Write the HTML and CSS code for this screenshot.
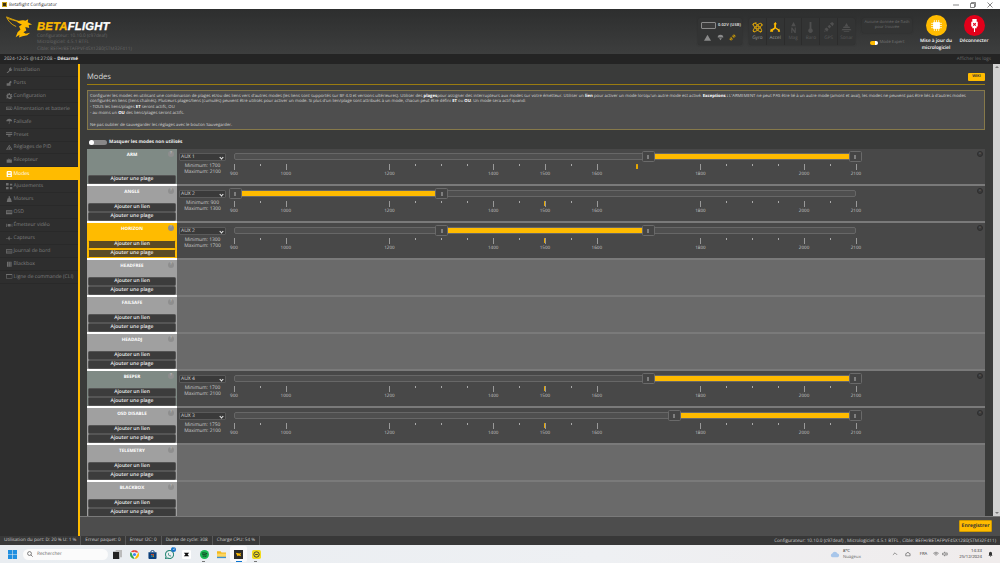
FILE: index.html
```html
<!DOCTYPE html>
<html lang="fr">
<head>
<meta charset="utf-8">
<title>Betaflight Configurator</title>
<link rel="stylesheet" href="styles.css">
</head>
<body>
<svg class="defs" width="0" height="0" aria-hidden="true">
  <symbol id="i-wrench" viewBox="0 0 10 10"><path d="M1 9 L5 5 A2.6 2.6 0 0 1 8.6 1.4 L7 3 L8 4 L9.4 2.6 A2.8 2.8 0 0 1 6 6 L2 10 Z"/></symbol>
  <symbol id="i-plug" viewBox="0 0 10 10"><path d="M1 9 L1 5 L4 5 L5 3 L7 1 L9 3 L7 5 L7 9 Z"/></symbol>
  <symbol id="i-gear" viewBox="0 0 10 10"><path fill-rule="evenodd" d="M4 0h2v1.600l1.400.6 1.100-1.100 1 1-1.100 1.300.6 1.100H10v2H8.400l-.6 1.300 1.100 1.100-1.200 1.200-1.100-1.100-.6.3V10H4V8.400l-1.300-.6-1.100 1.100-1.200-1.200 1.100-1.100-.4-1.600H0V4h1.600l.5-1.200L1 1.700l1-1 1.100 1.100L4 1.600zM5 3.200a1.800 1.800 0 1 0 0 3.600 1.800 1.800 0 0 0 0-3.600z"/></symbol>
  <symbol id="i-batt" viewBox="0 0 10 10"><path fill-rule="evenodd" d="M1 2.500h8a1 1 0 0 1 1 1v3a1 1 0 0 1-1 1H1a1 1 0 0 1-1-1v-3a1 1 0 0 1 1-1zM1 3.500v3h8v-3z"/><path d="M2 4.300h2v1.400H2zM5.500 4.300h2v1.400h-2z"/></symbol>
  <symbol id="i-umbrella" viewBox="0 0 10 10"><path d="M5 1C2.500 1 .6 2.800.4 5h9.200C9.400 2.800 7.500 1 5 1zM4.600 5h.8v3.300c0 1-1.800 1-1.800 0h.7c0 .2.300.2.300 0z"/></symbol>
  <symbol id="i-preset" viewBox="0 0 10 10"><path d="M0 2h10v1.500H0zM0 4.500h10V6H0zM3 7h4v1.500H3z"/></symbol>
  <symbol id="i-pid" viewBox="0 0 10 10"><path d="M5 1L10 9H0zM2 8h6L5 3z" fill-rule="evenodd"/><path d="M4 5h2v3H4z"/></symbol>
  <symbol id="i-rx" viewBox="0 0 10 10"><path d="M1 4h8v5H1zM3 1l2 3H4zM7 1L5 4h1z"/></symbol>
  <symbol id="i-modes" viewBox="0 0 10 10"><path fill-rule="evenodd" d="M2 0h6l1 1v8l-1 1H2L1 9V1zM3 2v2h4V2zM3 6v2h4V6z"/></symbol>
  <symbol id="i-adjust" viewBox="0 0 10 10"><path d="M0 0h4v4H0zM6 1h4v3H6zM0 6h4v4H0zM6 6h4v4H6z"/></symbol>
  <symbol id="i-motor" viewBox="0 0 10 10"><path d="M4 .5h2v3h1.500L9 9.500H1L2.500 3.500H4z"/></symbol>
  <symbol id="i-osd" viewBox="0 0 10 10"><path d="M0 2h10v6H0z"/><path d="M1 3.500h8v.7H1zM1 5.500h8v.7H1z" fill="#2e2e2e"/></symbol>
  <symbol id="i-vtx" viewBox="0 0 10 10"><path d="M3 3h4v4H3zM0 2.500h1v5H0zM2 3.500h.5v3H2zM9 2.500h1v5H9zM7.500 3.500H8v3h-.5z"/></symbol>
  <symbol id="i-sensor" viewBox="0 0 10 10"><path d="M0 4.500h3.500L4.500 2h1v2.500H10v1H5.500V8h-1L3.500 5.500H0z"/></symbol>
  <symbol id="i-log" viewBox="0 0 10 10"><path fill-rule="evenodd" d="M0 2h10v6.500H0zM1 3.500v1h8v-1zM1 5.500v1.500h8V5.500z"/></symbol>
  <symbol id="i-box" viewBox="0 0 10 10"><path d="M1.500 1h7v8h-7z"/><path d="M4 1h.7v8H4zM6 1h.7v8H6z" fill="#2e2e2e"/></symbol>
  <symbol id="i-cli" viewBox="0 0 10 10"><path fill-rule="evenodd" d="M0 1.500h10v7H0zM1 3v4.500h8V3z"/></symbol>
</svg>

<div class="titlebar">
  <span class="app-icon"></span>
  <span class="app-name">Betaflight Configurator</span>
  <span class="win-controls">
    <svg viewBox="0 0 6 6"><path d="M0 3h6" /></svg>
    <svg viewBox="0 0 6 6"><path d="M.5 1.500h4v4h-4zM1.500 1.500V.5h4v4h-1" fill="none"/></svg>
    <svg viewBox="0 0 6 6"><path d="M.5.5l5 5M5.500.5l-5 5"/></svg>
  </span>
</div>

<header class="header">
  <div class="brand">
    <svg class="bird" viewBox="0 0 29 24">
      <path class="bird-line" d="M.5 1.500C4 3 9 5 14.500 6.500M.5 1.500C2 5.500 5.500 9.500 10.500 11.500M1.500 3C5 4.500 10 5.500 13 6.500"/>
      <path class="bird-fill" d="M11 6.500C14 5 17 4.500 20 5.500L23 4 22.500 7 27 9.500 23.500 9.800 24 13 20 12 21 15.500 18 17.500 20.500 19 25 18 22 20.500 17 21.500 13.500 23 14 20 10 22.500 12 17.500 15 14.500 13.500 11.500 16.500 9.500 14 8.500Z"/>
    </svg>
    <div class="brand-text">
      <div class="wordmark"><span class="beta">BETA</span>FLIGHT</div>
      <div class="build">Configurateur: 10.10.0 (c97deaf)</div>
      <div class="build">Micrologiciel: 4.5.1 BTFL</div>
      <div class="build">Cible: BEFH/BETAFPVF4SX1280(STM32F411)</div>
    </div>
  </div>

  <div class="panel battery">
    <div class="batt-row"><span class="batt-shape"></span><span class="batt-text">0.02V (USB)</span></div>
    <div class="batt-icons">
      <svg class="ico-grey" viewBox="0 0 10 10"><path d="M5 1L10 9.500H0z"/></svg>
      <svg class="ico-grey" viewBox="0 0 10 10"><path d="M5 1C2 1 1 3 1 5h8C9 3 8 1 5 1zM3 6h4L5 9z"/></svg>
      <svg class="ico-yellow" viewBox="0 0 10 10"><path d="M2 8L4 6M6 4l2-2M1 7l2-2 2 2-2 2zM5 3l2-2 2 2-2 2z" fill="none"/></svg>
    </div>
  </div>

  <div class="panel sensors">
    <div class="sensor on">
      <svg viewBox="0 0 12 12"><g fill="none"><circle cx="6" cy="6" r="1.400"/><ellipse cx="6" cy="6" rx="6" ry="2.200" transform="rotate(45 6 6)"/><ellipse cx="6" cy="6" rx="6" ry="2.200" transform="rotate(-45 6 6)"/><rect x="1" y="1" width="10" height="10" rx="2" stroke-dasharray="2 6"/></g></svg>
      <span>Gyro</span>
    </div>
    <div class="sensor on">
      <svg viewBox="0 0 12 12"><path class="solid" d="M6 0l1.500 2.500h-1V6l3 2 .6-1 1 3.500H8.500l.5-1L6 7 3 9.500l.5 1H0L1 7l.6 1 3-2V2.500h-1z"/></svg>
      <span>Accel</span>
    </div>
    <div class="sensor">
      <svg viewBox="0 0 12 12"><path class="solid" d="M6 0l2.500 4.500h-5zM3.500 6h1.200l2.600 3.500V6h1.200v6H7.300L4.700 8.500V12H3.500z"/></svg>
      <span>Mag</span>
    </div>
    <div class="sensor">
      <svg viewBox="0 0 12 12"><path class="solid" d="M5 0h2v7.200a2.500 2.500 0 1 1-2 0z"/></svg>
      <span>Baro</span>
    </div>
    <div class="sensor">
      <svg viewBox="0 0 12 12"><path class="solid" d="M5 5l2-2 2 2-2 2zM7.500 1.500L10 0l2 2-1.500 2.500zM1.500 7.500L4 6l2 2-1.500 2.500zM1 11l1-2 1 1z"/></svg>
      <span>GPS</span>
    </div>
    <div class="sensor">
      <svg viewBox="0 0 12 12"><path class="solid" d="M6 1l2 3.500H4zM3 5h6l1 1.500H2zM1.500 7.500h9l1 1.500H.5zM3 10h6v1H3z"/></svg>
      <span>Sonar</span>
    </div>
  </div>

  <div class="flash-col">
    <div class="flash">Aucune donnée de flash<br>pour trouvée</div>
    <div class="expert"><span class="mini-switch"></span><span>Mode Expert</span></div>
  </div>

  <div class="action">
    <span class="disc disc-yellow">
      <svg viewBox="0 0 12 12"><path class="chip" d="M3 3h6v6H3z"/><path class="chip-pins" d="M4 1v10M6 1v10M8 1v10M1 4h10M1 6h10M1 8h10"/><path class="chip" d="M3.200 3.200h5.600v5.600H3.200z"/></svg>
    </span>
    <span class="action-label">Mise à jour du<br>micrologiciel</span>
  </div>
  <div class="action">
    <span class="disc disc-red">
      <svg viewBox="0 0 12 12"><path class="plug" d="M4 0h4v2.500h1V7H8v1.500H6.500V12h-1V8.500H4V7H3V2.500h1z"/><path class="plug-x" d="M4.800 3.800l2.400 2.400M7.200 3.800L4.800 6.200"/></svg>
    </span>
    <span class="action-label">Déconnecter</span>
  </div>
</header>

<div class="logbar">
  <span>2024-12-25 @14:27:08 – <b>Désarmé</b></span>
  <span class="show-logs">Afficher les logs</span>
</div>

<div class="main">
  <nav class="sidebar">
    <a class="nav-item"><svg><use href="#i-wrench"/></svg>Installation</a>
    <a class="nav-item"><svg><use href="#i-plug"/></svg>Ports</a>
    <a class="nav-item"><svg><use href="#i-gear"/></svg>Configuration</a>
    <a class="nav-item"><svg><use href="#i-batt"/></svg>Alimentation et batterie</a>
    <a class="nav-item"><svg><use href="#i-umbrella"/></svg>Failsafe</a>
    <a class="nav-item"><svg><use href="#i-preset"/></svg>Preset</a>
    <a class="nav-item"><svg><use href="#i-pid"/></svg>Réglages de PID</a>
    <a class="nav-item"><svg><use href="#i-rx"/></svg>Récepteur</a>
    <a class="nav-item active"><svg><use href="#i-modes"/></svg>Modes</a>
    <a class="nav-item"><svg><use href="#i-adjust"/></svg>Ajustements</a>
    <a class="nav-item"><svg><use href="#i-motor"/></svg>Moteurs</a>
    <a class="nav-item"><svg><use href="#i-osd"/></svg>OSD</a>
    <a class="nav-item"><svg><use href="#i-vtx"/></svg>Émetteur vidéo</a>
    <a class="nav-item"><svg><use href="#i-sensor"/></svg>Capteurs</a>
    <a class="nav-item"><svg><use href="#i-log"/></svg>Journal de bord</a>
    <a class="nav-item"><svg><use href="#i-box"/></svg>Blackbox</a>
    <a class="nav-item"><svg><use href="#i-cli"/></svg>Ligne de commande (CLI)</a>
  </nav>

  <section class="content">
    <div class="scroll">
      <div class="page">
        <div class="title-row"><h1>Modes</h1><span class="wiki">WIKI</span></div>
        <div class="note">
          <p>Configurer les modes en utilisant une combinaison de plages et/ou des liens vers d'autres modes (les liens sont supportés sur BF 4.0 et versions ultérieures). Utiliser des <b>plages</b>pour assigner des interrupteurs aux modes sur votre émetteur. Utiliser un <b>lien</b> pour activer un mode lorsqu'un autre mode est activé. <b>Exceptions :</b> L'ARMEMENT ne peut PAS être lié à un autre mode (amont et aval), les modes ne peuvent pas être liés à d'autres modes configurés en liens (liens chaînés). Plusieurs plages/liens (cumulés) peuvent être utilisés pour activer un mode. Si plus d'un lien/plage sont attribués à un mode, chacun peut être défini <b>ET</b> ou <b>OU</b>. Un mode sera actif quand:<br>- TOUS les liens/plages <b>ET</b> seront actifs, OU<br>- au moins un <b>OU</b> des liens/plages seront actifs.<br><br>Ne pas oublier de sauvegarder les réglages avec le bouton Sauvegarder.</p>
        </div>
        <label class="hide-unused"><span class="switch"></span>Masquer les modes non utilisés</label>

        <div class="mode armed">
          <div class="mode-head">
            <div class="mode-name">ARM<i class="help">?</i></div>
            <button class="add">Ajouter une plage</button>
          </div>
          <div class="mode-body">
            <div class="range-ctl">
              <div class="aux">AUX 1</div>
              <div class="minmax">Minimum: 1700<br>Maximum: 2100</div>
            </div>
            <div class="slider">
              <div class="track"><span class="fill" style="left:66.67%;width:33.33%"></span><span class="handle" style="left:66.67%"></span><span class="handle" style="left:100%"></span></div>
              <div class="scale"><span class="mark" style="left:64.8%"></span><b>900</b><b>1000</b><u></u><b>1200</b><u></u><b>1400</b><b>1500</b><b>1600</b><u></u><b>1800</b><u></u><b>2000</b><b>2100</b></div>
            </div>
            <i class="remove"></i>
          </div>
        </div>

        <div class="mode">
          <div class="mode-head">
            <div class="mode-name">ANGLE<i class="help">?</i></div>
            <button class="add">Ajouter un lien</button>
            <button class="add">Ajouter une plage</button>
          </div>
          <div class="mode-body">
            <div class="range-ctl">
              <div class="aux">AUX 2</div>
              <div class="minmax">Minimum: 900<br>Maximum: 1300</div>
            </div>
            <div class="slider">
              <div class="track"><span class="fill" style="left:0;width:33.33%"></span><span class="handle" style="left:0"></span><span class="handle" style="left:33.33%"></span></div>
              <div class="scale"><span class="mark" style="left:50%"></span><b>900</b><b>1000</b><u></u><b>1200</b><u></u><b>1400</b><b>1500</b><b>1600</b><u></u><b>1800</b><u></u><b>2000</b><b>2100</b></div>
            </div>
            <i class="remove"></i>
          </div>
        </div>

        <div class="mode live">
          <div class="mode-head">
            <div class="mode-name">HORIZON<i class="help">?</i></div>
            <button class="add">Ajouter un lien</button>
            <button class="add">Ajouter une plage</button>
          </div>
          <div class="mode-body">
            <div class="range-ctl">
              <div class="aux">AUX 2</div>
              <div class="minmax">Minimum: 1300<br>Maximum: 1700</div>
            </div>
            <div class="slider">
              <div class="track"><span class="fill" style="left:33.33%;width:33.33%"></span><span class="handle" style="left:33.33%"></span><span class="handle" style="left:66.67%"></span></div>
              <div class="scale"><span class="mark" style="left:50%"></span><b>900</b><b>1000</b><u></u><b>1200</b><u></u><b>1400</b><b>1500</b><b>1600</b><u></u><b>1800</b><u></u><b>2000</b><b>2100</b></div>
            </div>
            <i class="remove"></i>
          </div>
        </div>

        <div class="mode unused">
          <div class="mode-head">
            <div class="mode-name">HEADFREE<i class="help">?</i></div>
            <button class="add">Ajouter un lien</button>
            <button class="add">Ajouter une plage</button>
          </div>
          <div class="mode-body"></div>
        </div>

        <div class="mode unused">
          <div class="mode-head">
            <div class="mode-name">FAILSAFE<i class="help">?</i></div>
            <button class="add">Ajouter un lien</button>
            <button class="add">Ajouter une plage</button>
          </div>
          <div class="mode-body"></div>
        </div>

        <div class="mode unused">
          <div class="mode-head">
            <div class="mode-name">HEADADJ<i class="help">?</i></div>
            <button class="add">Ajouter un lien</button>
            <button class="add">Ajouter une plage</button>
          </div>
          <div class="mode-body"></div>
        </div>

        <div class="mode armed">
          <div class="mode-head">
            <div class="mode-name">BEEPER<i class="help">?</i></div>
            <button class="add">Ajouter un lien</button>
            <button class="add">Ajouter une plage</button>
          </div>
          <div class="mode-body">
            <div class="range-ctl">
              <div class="aux">AUX 4</div>
              <div class="minmax">Minimum: 1700<br>Maximum: 2100</div>
            </div>
            <div class="slider">
              <div class="track"><span class="fill" style="left:66.67%;width:33.33%"></span><span class="handle" style="left:66.67%"></span><span class="handle" style="left:100%"></span></div>
              <div class="scale"><span class="mark" style="left:50%"></span><b>900</b><b>1000</b><u></u><b>1200</b><u></u><b>1400</b><b>1500</b><b>1600</b><u></u><b>1800</b><u></u><b>2000</b><b>2100</b></div>
            </div>
            <i class="remove"></i>
          </div>
        </div>

        <div class="mode">
          <div class="mode-head">
            <div class="mode-name">OSD DISABLE<i class="help">?</i></div>
            <button class="add">Ajouter un lien</button>
            <button class="add">Ajouter une plage</button>
          </div>
          <div class="mode-body">
            <div class="range-ctl">
              <div class="aux">AUX 3</div>
              <div class="minmax">Minimum: 1750<br>Maximum: 2100</div>
            </div>
            <div class="slider">
              <div class="track"><span class="fill" style="left:70.83%;width:29.17%"></span><span class="handle" style="left:70.83%"></span><span class="handle" style="left:100%"></span></div>
              <div class="scale"><span class="mark" style="left:50%"></span><b>900</b><b>1000</b><u></u><b>1200</b><u></u><b>1400</b><b>1500</b><b>1600</b><u></u><b>1800</b><u></u><b>2000</b><b>2100</b></div>
            </div>
            <i class="remove"></i>
          </div>
        </div>

        <div class="mode unused">
          <div class="mode-head">
            <div class="mode-name">TELEMETRY<i class="help">?</i></div>
            <button class="add">Ajouter un lien</button>
            <button class="add">Ajouter une plage</button>
          </div>
          <div class="mode-body"></div>
        </div>

        <div class="mode unused">
          <div class="mode-head">
            <div class="mode-name">BLACKBOX<i class="help">?</i></div>
            <button class="add">Ajouter un lien</button>
            <button class="add">Ajouter une plage</button>
          </div>
          <div class="mode-body"></div>
        </div>
      </div>
      <div class="scrollbar"><span class="arrow up"></span><span class="arrow down"></span></div>
    </div>
    <div class="savebar"><button class="save">Enregistrer</button></div>
  </section>
</div>

<footer class="status">
  <span class="cell">Utilisation du port: D: 20 % U: 1 %</span>
  <span class="cell">Erreur paquet: 0</span>
  <span class="cell">Erreur I2C: 0</span>
  <span class="cell">Durée de cycle: 308</span>
  <span class="cell">Charge CPU: 54 %</span>
  <span class="versions">Configurateur: 10.10.0 (c97deaf) , Micrologiciel: 4.5.1 BTFL , Cible: BEFH/BETAFPVF4SX1280(STM32F411)</span>
</footer>

<div class="taskbar">
  <svg class="tb-start" viewBox="0 0 10 10"><path d="M0 0h4.700v4.700H0zM5.300 0H10v4.700H5.300zM0 5.300h4.700V10H0zM5.300 5.300H10V10H5.300z"/></svg>
  <div class="tb-search">
    <svg viewBox="0 0 10 10"><circle cx="4.200" cy="4.200" r="3.200"/><path d="M6.500 6.500L9.500 9.500"/></svg>
    <span>Rechercher</span>
  </div>
  <div class="tb-apps">
    <span class="tb-app"><svg viewBox="0 0 10 10"><path d="M0 2h7v8H0z" fill="#222"/><path d="M3 0h7v8H7V2H3z" fill="#bbb"/></svg></span>
    <span class="tb-app"><svg viewBox="0 0 10 10"><path d="M5 0a5 5 0 0 1 4.500 2.800H5z" fill="#ea4335"/><path d="M9.500 2.800A5 5 0 0 1 5 10l2.200-4z" fill="#fbbc05"/><path d="M5 10A5 5 0 0 1 1 2l2.300 4z" fill="#34a853"/><path d="M1 2A5 5 0 0 1 5 0v2.800z" fill="#ea4335"/><circle cx="5" cy="5" r="2.400" fill="#fff"/><circle cx="5" cy="5" r="1.800" fill="#4285f4"/></svg></span>
    <span class="tb-app"><svg viewBox="0 0 10 10"><path d="M.5 2.500h9V9a1 1 0 0 1-1 1h-7a1 1 0 0 1-1-1z" fill="#0b3f7a"/><path d="M3 2.500a2 2 0 0 1 4 0" fill="none" stroke="#0b3f7a"/><path d="M3.500 4.500h1.300v1.300H3.500zM5.200 4.500h1.300v1.300H5.200z" fill="#f25022"/><path d="M3.500 6.200h1.300v1.300H3.500z" fill="#00a4ef"/><path d="M5.200 6.200h1.300v1.300H5.200z" fill="#ffb900"/></svg></span>
    <span class="tb-app tb-badged"><svg viewBox="0 0 10 10"><path d="M5 .5a4.500 4.500 0 1 1-2.200 8.400L.5 9.500 1.200 7.300A4.500 4.500 0 0 1 5 .5z" fill="none" stroke="#2e8b78" stroke-width="1.200"/><path d="M3.500 3l1 1.500-.4.600 1 1 .7-.4L7 6.800C5.500 8 2.500 5.500 3.500 3z" fill="#2e8b78"/></svg><i class="badge">2</i></span>
    <span class="tb-app"><svg viewBox="0 0 10 10"><rect width="10" height="10" rx="1.500" fill="#fff"/><path d="M2 3h6L6.200 5 8 7H2l1.800-2z" fill="#111"/></svg></span>
    <span class="tb-app tb-running"><svg viewBox="0 0 10 10"><circle cx="5" cy="5" r="5" fill="#1db954"/><path d="M2 3.500c2-.5 4-.3 6 .6M2.500 5.200c1.800-.4 3.400-.2 5 .5M3 6.800c1.400-.3 2.800-.1 4 .4" fill="none" stroke="#111" stroke-width=".8"/></svg></span>
    <span class="tb-app"><svg viewBox="0 0 10 10"><path d="M0 1.500h4l1 1.200h5V9H0z" fill="#f4b81c"/><path d="M0 4h10v5H0z" fill="#fcd55f"/><path d="M0 7.500h10V9H0z" fill="#3b8ed0"/></svg></span>
    <span class="tb-app tb-active"><svg viewBox="0 0 10 10"><rect width="10" height="10" fill="#2b2b2b"/><path d="M2 3l4 1 2-1-1 2 1 2-3-1-1 1z" fill="#ffbb00"/></svg></span>
    <span class="tb-app tb-running"><svg viewBox="0 0 10 10"><rect width="10" height="10" rx="2" fill="#f2dc1d"/><circle cx="5" cy="5" r="3" fill="none" stroke="#333" stroke-width="1"/><path d="M3.500 5h3" stroke="#333" stroke-width="1"/></svg></span>
  </div>
  <div class="tb-tray">
    <svg class="tb-cloud" viewBox="0 0 14 9"><path d="M3.500 8.500a2.700 2.700 0 0 1-.3-5.300A3.800 3.800 0 0 1 10.400 3a2.800 2.800 0 0 1 .3 5.500z"/></svg>
    <div class="tb-weather">8°C<br><span>Nuageux</span></div>
    <svg class="tb-ico chevron" viewBox="0 0 10 10"><path d="M1.500 6.500L5 3l3.500 3.500"/></svg>
    <svg class="tb-ico cloud-out" viewBox="0 0 10 10"><path d="M2 8h6.500V4.500H7L6 2.500H3.500L2.500 4.500H1.200V8z"/></svg>
    <span class="tb-lang">FRA</span>
    <svg class="tb-ico wifi" viewBox="0 0 10 10"><path d="M.5 4a6.500 6.500 0 0 1 9 0M2 5.500a4.300 4.300 0 0 1 6 0M3.500 7a2 2 0 0 1 3 0"/></svg>
    <svg class="tb-ico vol" viewBox="0 0 10 10"><path d="M.8 3.800h1.500L5 1.500v7L2.300 6.200H.8zM6.500 3.500a2 2 0 0 1 0 3M7.800 2.200a4 4 0 0 1 0 5.600"/></svg>
    <div class="tb-clock">14:33<br>25/12/2024</div>
    <svg class="tb-bell" viewBox="0 0 10 10"><path d="M5 .5a3 3 0 0 1 3 3V7l1 1.300H1L2 7V3.500a3 3 0 0 1 3-3zM4 9h2v1H4z"/></svg>
  </div>
</div>
</body>
</html>
```
FILE: styles.css
```css
* { box-sizing: border-box; }
html, body { margin: 0; padding: 0; }
body {
  width: 1000px; height: 563px; overflow: hidden;
  display: flex; flex-direction: column;
  font-family: "Open Sans", "Noto Sans", sans-serif;
  font-size: 5.2px; color: #ddd; background: #3a3b3a;
  text-rendering: geometricPrecision;
}
button { text-rendering: geometricPrecision; }
.defs { position: absolute; }
b { font-weight: 700; }

/* title bar */
.titlebar { height: 9px; flex: none; background: #fff; display: flex; align-items: center; padding-left: 2px; color: #333; font-size: 4.5px; }
.app-icon { width: 5px; height: 5px; background: #3a2e10; border: 1px solid #caa017; margin-right: 2px; }
.win-controls { margin-left: auto; display: flex; gap: 11px; padding-right: 7px; }
.win-controls svg { width: 6px; height: 6px; fill: none; stroke: #555; stroke-width: .7; }

/* header */
.header {
  height: 45px; flex: none; display: flex; align-items: flex-start; padding: 9px 7px 0 0;
  background: linear-gradient(#2d2e2e, #3d3e3e);
}
.brand { display: flex; align-items: flex-start; margin-right: auto; margin-top: -3px; padding-left: 6px; }
.bird { width: 28px; height: 24px; margin-right: 3px; }
.bird-line { fill: none; stroke: #ffbb00; stroke-width: .8; }
.bird-fill { fill: #ffbb00; }
.brand-text { margin-top: 7px; }
.wordmark { font-family: "Liberation Sans", sans-serif; font-weight: 700; font-style: italic; font-size: 11.3px; line-height: 11px; color: #fff; letter-spacing: .2px; -webkit-text-stroke: .3px currentColor; }
.beta { color: #ffbb00; }
.build { color: #666; font-size: 4.7px; line-height: 6.4px; white-space: nowrap; }

.panel { height: 27px; background: #333434; border-radius: 2px; box-shadow: 0 0 2px #2a2a2a; }
.battery { width: 44px; padding: 4px 3px 0; margin-right: 7px; }
.batt-row { display: flex; align-items: center; gap: 2px; }
.batt-shape { width: 15px; height: 7px; border: 1px solid #8a8a8a; border-radius: 1px; background: #3c3c3c; flex: none; }
.batt-text { font-size: 4.1px; font-weight: 700; color: #ccc; white-space: nowrap; }
.batt-icons { display: flex; justify-content: space-between; padding: 5px 3px 0 3px; }
.batt-icons svg { width: 7px; height: 7px; }
.ico-grey { fill: #8a8a8a; }
.ico-yellow { stroke: #e0a800; stroke-width: 1.2; }

.sensors { width: 106px; display: flex; margin-right: 7px; }
.sensor { flex: 1; display: flex; flex-direction: column; align-items: center; padding-top: 4px; border-right: 1px solid #2c2c2c; font-size: 4.7px; color: #5a5a5a; }
.sensor:last-child { border-right: 0; }
.sensor svg { width: 11px; height: 11px; margin-bottom: 2px; fill: none; stroke: #4f4f4f; stroke-width: .9; }
.sensor .solid { fill: #4f4f4f; stroke: none; }
.sensor.on { color: #9a9a9a; }
.sensor.on svg { stroke: #ffbb00; }
.sensor.on .solid { fill: #ffbb00; }

.flash-col { width: 50px; margin-right: 5px; }
.flash { height: 15px; background: #333434; border-radius: 2px; box-shadow: 0 0 2px #2a2a2a; color: #6e6e6e; font-size: 4px; line-height: 5.4px; text-align: center; padding-top: 2px; }
.expert { display: flex; align-items: center; justify-content: center; gap: 2px; margin-top: 7px; font-size: 4.2px; color: #777; }
.mini-switch { width: 8px; height: 4px; border-radius: 2px; background: linear-gradient(90deg, #ffbb00 60%, #fff 60%); }

.action { width: 38px; display: flex; flex-direction: column; align-items: center; margin-top: -3px; }
.disc { width: 21px; height: 21px; border-radius: 50%; display: flex; align-items: center; justify-content: center; }
.disc svg { width: 13px; height: 13px; }
.disc-yellow { background: #ffbb00; }
.disc-red { background: #e2001a; }
.chip { fill: #fff; }
.chip-pins { stroke: #fff; stroke-width: .7; fill: none; }
.plug { fill: #fff; }
.plug-x { stroke: #e2001a; stroke-width: 1; fill: none; }
.action-label { color: #fff; font-size: 4.7px; font-weight: 600; line-height: 6.5px; text-align: center; margin-top: 2px; white-space: nowrap; }

/* log bar */
.logbar { height: 10px; flex: none; background: #242424; display: flex; justify-content: space-between; align-items: center; padding: 0 9px 0 4px; font-size: 4.7px; color: #ccc; }
.logbar b { color: #eee; }
.show-logs { color: #6a6a6a; }

/* body */
.main { height: 472px; flex: none; display: flex; }
.sidebar { width: 80px; flex: none; background: #2e2e2e; border-right: 2px solid #ffbb00; display: flex; flex-direction: column; }
.nav-item { height: 12.93px; flex: none; display: flex; align-items: center; padding-left: 6px; font-size: 5.1px; color: #808080; border-bottom: 1px solid #292929; white-space: nowrap; }
.nav-item svg { width: 6.5px; height: 6.5px; margin-right: 1px; fill: #6f6f6f; flex: none; }
.nav-item.active { background: #ffbb00; color: #fff; border-bottom: 0; }
.nav-item.active svg { fill: #fff; }

.content { flex: 1; min-width: 0; display: flex; flex-direction: column; }
.scroll { height: 452px; flex: none; display: flex; overflow: hidden; background: #3a3b3a; }
.page { flex: 1; min-width: 0; padding: 0 8px 0 7px; overflow: hidden; }
.scrollbar { width: 7px; flex: none; background: #d2d2d2; display: flex; flex-direction: column; justify-content: space-between; padding: 2px 0; align-items: center; }
.arrow { width: 0; height: 0; border-left: 2px solid transparent; border-right: 2px solid transparent; }
.arrow.up { border-bottom: 2px solid #777; }
.arrow.down { border-top: 2px solid #777; }

.title-row { height: 21px; display: flex; justify-content: space-between; align-items: flex-start; border-bottom: 1px solid #9a7c10; }
h1 { margin: 8px 0 0; font-size: 7.6px; line-height: 11px; font-weight: 400; color: #d8d8d8; }
.wiki { margin-top: 9px; width: 17px; height: 8px; border-radius: 1px; background: #ffbb00; color: #333; font-size: 3.8px; font-weight: 700; text-align: center; line-height: 8px; }

.note { margin-top: 5px; height: 40px; background: #4e4e4e; border: 1px solid #86794a; padding: 2.5px 2px 0 2px; }
.note p { margin: 0; font-size: 4.25px; line-height: 5.9px; color: #d6d6d6; }
.note b { color: #fff; }

.hide-unused { display: flex; align-items: center; height: 6px; margin: 9px 0 4px 2px; color: #eee; font-weight: 700; font-size: 4.7px; }
.switch { width: 18px; height: 5px; border-radius: 3px; background: #888; margin-right: 2px; position: relative; }
.switch::before { content: ""; position: absolute; left: 0; top: 0; width: 5px; height: 5px; border-radius: 50%; background: #fff; }

/* mode rows */
.mode { height: 37px; display: flex; }
.mode-head { width: 90px; flex: none; height: 37px; border-bottom: 2px solid #fff; background: #a0a0a0; display: flex; flex-direction: column; padding: 0 1px; }
.mode-name { position: relative; height: 10px; flex: none; margin-bottom: auto; padding-top: 2.5px; color: #fff; font-weight: 700; font-size: 4.6px; line-height: 6px; text-align: center; }
.help { position: absolute; right: 2px; top: 2px; width: 6px; height: 6px; border-radius: 50%; background: #8e8e8e; color: #bbb; font-style: normal; font-size: 4px; line-height: 6px; }
.add { height: 8.5px; margin: 0 0 .5px; padding: 0; background: #3c3c3c; border: 1px solid #555; border-radius: 1.5px; color: #eee; font-family: inherit; font-size: 5px; font-weight: 600; line-height: 6px; }
.mode-body { flex: 1; min-width: 0; height: 37px; border-bottom: 2px solid #7a7a7a; background: #484848; display: flex; align-items: flex-start; padding: 4px 0 0 2px; position: relative; }
.armed .mode-head { background: #7f8a85; }
.live .mode-head { background: #ffbb00; }
.live .add { background: #5c4a24; border-color: #ffbb00; }
.unused .mode-body { background: #6a6a6a; }

.range-ctl { width: 47px; flex: none; margin-right: 8px; }
.aux { height: 7.5px; border: 1px solid #5a5a5a; border-radius: 1px; background: #3a3a3a; color: #ddd; font-size: 5px; line-height: 6px; padding-left: 1px; position: relative; }
.aux::after { content: ""; position: absolute; right: 2px; top: 1.5px; width: 2px; height: 2px; border-right: .7px solid #eee; border-bottom: .7px solid #eee; transform: rotate(45deg); }
.minmax { text-align: center; font-size: 4.9px; line-height: 6.3px; color: #ccc; margin-top: 2.5px; }

.slider { width: 622px; flex: none; }
.track { height: 7px; position: relative; background: #4f4f4f; border: 1px solid #676767; border-radius: 2px; }
.fill { position: absolute; top: 0; bottom: 0; background: #ffbb00; }
.handle { position: absolute; top: -3px; width: 13px; height: 11px; margin-left: -6.5px; background: #454545; border: 1px solid #6a6a6a; border-radius: 1.5px; }
.handle::after { content: ""; position: absolute; left: 4.5px; top: 2.5px; width: 2px; height: 4px; background: #7f7f7f; }

.scale {
  position: relative; height: 15px; margin-top: 3.5px; display: flex; justify-content: space-between;
  background: repeating-linear-gradient(90deg, #aaa 0, #aaa .7px, transparent .7px, transparent 25.917px) 0 0 / 100% 2px no-repeat;
}
.scale b, .scale u { width: 0; position: relative; font-weight: 400; text-decoration: none; display: flex; justify-content: center; color: #c4c4c4; font-size: 4.6px; line-height: 5px; padding-top: 8.5px; white-space: nowrap; }
.scale b::before { content: ""; position: absolute; left: 0; top: 0; width: .8px; height: 6px; background: #999; }
.mark { position: absolute; top: 0; width: 2px; height: 5px; margin-left: -1px; background: #e8a800; border-radius: .5px; }
.remove { position: absolute; right: 2px; top: 2px; width: 6px; height: 6px; border-radius: 50%; background: #3b3b3b; border: .7px solid #2e2e2e; }
.remove::after { content: "×"; position: absolute; inset: 0; color: #666; font-style: normal; font-size: 5px; line-height: 4.5px; text-align: center; }

/* save bar */
.savebar { flex: 1; background: #4d4d4d; border-top: 1px solid #7a7a7a; display: flex; justify-content: flex-end; align-items: flex-start; padding: 3px 8px 0 0; }
.save { width: 33px; height: 12px; padding: 0; border: 1px solid #d09a00; border-radius: 1px; background: #ffbb00; color: #333; font-family: inherit; font-size: 5px; font-weight: 700; }

/* status */
.status { height: 9px; flex: none; background: #383838; display: flex; align-items: center; font-size: 4.65px; color: #ccc; white-space: nowrap; }
.cell { padding: 0 4px; border-right: 1px solid #585858; line-height: 9px; }
.versions { margin-left: auto; padding-right: 4px; }

/* taskbar */
.taskbar { height: 18px; flex: none; background: linear-gradient(90deg, #e9edf1 0, #eef0f3 60%, #f0ecec 100%); display: flex; align-items: center; color: #333; }
.tb-start { width: 9px; height: 9px; margin-left: 8px; fill: #1f8fe0; flex: none; }
.tb-search { width: 85px; height: 11px; margin-left: 6px; background: #fbfbfb; border-radius: 6px; display: flex; align-items: center; padding-left: 4px; font-size: 4.7px; color: #666; flex: none; }
.tb-search svg { width: 6px; height: 6px; margin-right: 4px; fill: none; stroke: #333; stroke-width: 1; }
.tb-apps { display: flex; margin-left: 1px; }
.tb-app { width: 17.3px; height: 16px; display: flex; align-items: center; justify-content: center; position: relative; flex: none; }
.tb-app svg { width: 9px; height: 9px; }
.tb-running::after, .tb-active::after { content: ""; position: absolute; bottom: 0; left: 7px; width: 3px; height: 1px; background: #777; }
.tb-active { background: #f9f9fb; border-radius: 2px; }
.tb-active::after { left: 5.5px; width: 6px; background: #0a74d0; }
.badge { position: absolute; right: 2px; top: 1px; width: 5px; height: 5px; border-radius: 50%; background: #1a73c9; color: #fff; font-style: normal; font-size: 3.5px; line-height: 5px; text-align: center; }
.tb-tray { margin-left: auto; display: flex; align-items: center; padding-right: 7px; }
.tb-cloud { width: 10px; height: 7px; fill: #a8c6ea; margin-right: 3px; }
.tb-weather { width: 49px; font-size: 4.3px; line-height: 6px; color: #333; }
.tb-weather span { color: #666; }
.tb-ico { width: 6px; height: 6px; fill: none; stroke: #444; stroke-width: .9; flex: none; }
.chevron { margin-right: 7px; }
.cloud-out { margin-right: 6px; }
.tb-lang { width: 13px; font-size: 4.3px; margin-right: 3px; text-align: center; }
.wifi { margin-right: 3px; }
.vol { margin-right: 4px; }
.tb-clock { width: 30px; text-align: right; font-size: 4.3px; line-height: 6.5px; color: #333; margin-right: 6px; }
.tb-bell { width: 5px; height: 6px; fill: #333; flex: none; }
```
